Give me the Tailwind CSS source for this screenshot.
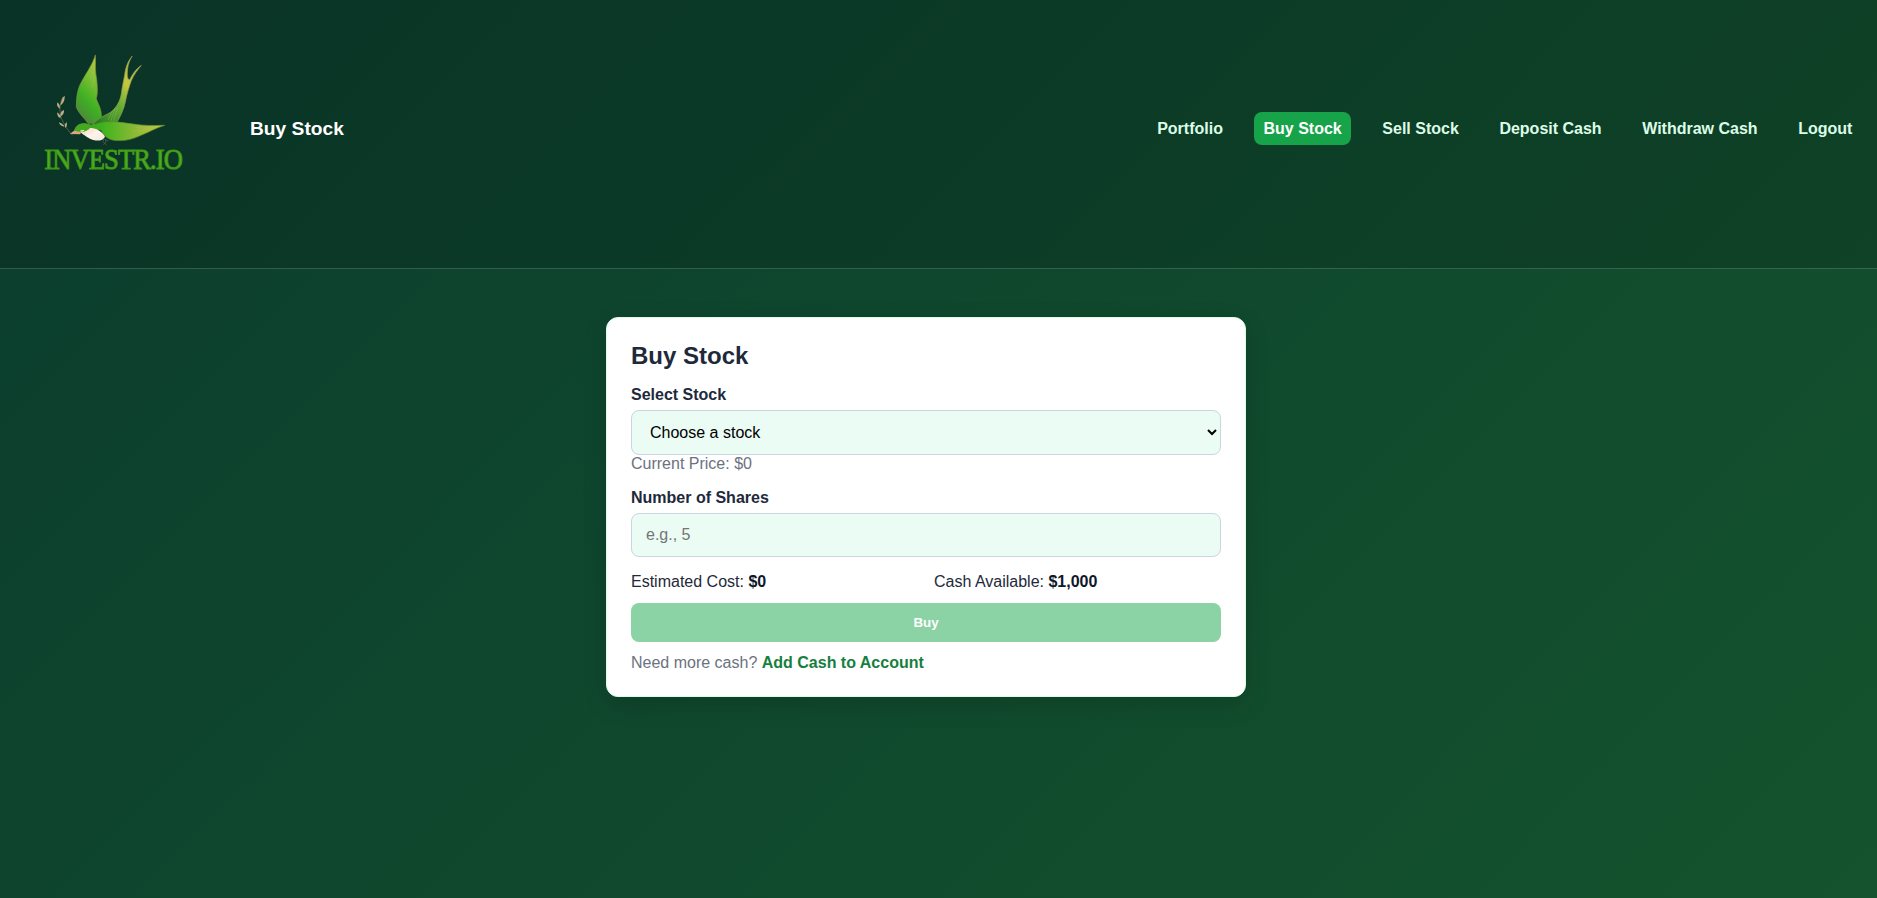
<!DOCTYPE html>
<html lang="en">
<head>
<meta charset="utf-8">
<title>Investr.io – Buy Stock</title>
<script src="https://cdn.jsdelivr.net/npm/@tailwindcss/browser@4"></script>
</head>
<body class="min-h-screen bg-[linear-gradient(135deg,#0b3d2e,#14532d)] font-['Liberation_Sans',Arial,sans-serif] text-base text-[#0f172a]">
<header class="flex h-[269px] items-start border-b border-white/18 bg-black/15 pl-[30px] pr-[15px]">
  <svg class="mt-10 h-[140px] w-[170px] shrink-0 overflow-visible" viewBox="0 0 510 420" role="img" aria-label="Investr.io">
    <defs>
      <linearGradient id="wing" x1="0.8" y1="0" x2="0.4" y2="1"><stop offset="0" stop-color="#c3cc3e"/><stop offset=".35" stop-color="#7fc035"/><stop offset=".7" stop-color="#3fb022"/><stop offset="1" stop-color="#4a8a3a"/></linearGradient>
      <linearGradient id="tail" x1=".8" y1="0" x2=".2" y2="1"><stop offset="0" stop-color="#b3bd44"/><stop offset=".35" stop-color="#c3c83c"/><stop offset=".6" stop-color="#6db338"/><stop offset="1" stop-color="#288221"/></linearGradient>
      <linearGradient id="right" x1="0" y1="0" x2="1" y2="0"><stop offset="0" stop-color="#2f9a1f"/><stop offset=".3" stop-color="#3bb31c"/><stop offset=".65" stop-color="#87b934"/><stop offset="1" stop-color="#c8c943"/></linearGradient>
      <linearGradient id="belly" x1="0" y1="0" x2="1" y2="1"><stop offset="0" stop-color="#f1d2b8"/><stop offset=".5" stop-color="#fff3ea"/><stop offset="1" stop-color="#f3e8e0"/></linearGradient>
    </defs>
    <g stroke-linejoin="round" stroke-linecap="round">
      <path d="M306 49C293 64 287 82 284 104C281 122 276 142 274 160C271 182 260 202 243 216C225 227 204 233 187 254L259 250C271 230 282 208 287 182C291 160 299 136 304 122C312 103 323 90 334 76C317 87 307 104 299 119C290 117 292 101 293 86C295 72 299 61 306 49Z" fill="url(#tail)" stroke="#929950" stroke-width="2"/>
      <path d="M196 46C186 78 165 104 150 134C141 155 139 175 139 202C147 222 164 235 174 250L190 250L203 238L214 230C215 207 205 194 199 176C204 159 202 140 200 117C194 91 198 67 196 46Z" fill="url(#wing)" stroke="#7d963d" stroke-width="2"/>
      <path d="M133 273C137 254 155 246 176 253C199 260 209 243 235 246C266 244 285 250 311 252C340 257 371 257 404 256C378 264 358 276 333 286C306 299 282 304 252 301C230 297 220 284 213 270C190 266 168 277 148 277Z" fill="url(#right)" stroke="#659033" stroke-width="2"/>
      <path d="M151 277C165 276 172 270 180 264C195 264 215 271 225 290C220 300 210 303 193 301C177 298 164 286 151 277Z" fill="url(#belly)"/>
      <path d="M133 273C137 254 155 246 176 253C183 257 181 267 171 271C160 278 148 276 133 273Z" fill="#45a81e"/>
      <path d="M132 272L119 282L151 283L153 276Z" fill="#dba57d"/>
      <path d="M153 273L161 272" stroke="#e4f2cf" stroke-width="4"/>
      <path d="M243 242L255 205M251 242L262 205M235 239L246 215M181 119L193 82M187 141L195 95M318 263L369 258M312 273L357 265" fill="none" stroke="#b5bf65" stroke-opacity=".5" stroke-width="2"/>
      <path d="M222 296L219 305L229 315M226 297L228 307L221 313M228 300L234 302" fill="none" stroke="#626251" stroke-width="2"/>
      <path d="M127 285C115 274 101 253 92 229C88 211 89 190 98 172" fill="none" stroke="#71775f" stroke-width="2"/>
      <g fill="#bcae83"><path d="M91 196C94 184 97 171 104 167C105 179 100 191 91 196ZM89 206C80 199 80 192 83 187C89 194 91 200 89 206ZM91 227C91 217 96 210 102 211C103 220 98 227 91 230ZM91 235C82 230 81 223 82 217C91 225 93 230 91 235ZM103 260C92 258 88 253 87 247C97 251 103 256 103 260ZM106 264C103 256 106 249 110 247C112 255 110 261 106 264Z"/></g>
    </g>
    <text x="43" y="388" textLength="413" lengthAdjust="spacingAndGlyphs" font-family="Liberation Serif,serif" font-size="86" letter-spacing="-3" fill="#4caf1d" stroke="#3f9717" stroke-width="3">INVESTR.IO</text>
  </svg>
  <div class="flex h-[256px] flex-1 items-center justify-between pl-[50px]">
    <h1 class="pt-0.5 text-[19.2px] font-bold text-white">Buy Stock</h1>
    <nav class="flex gap-[21.4px] font-bold text-[#dcfce7]">
      <a class="flex h-[33px] items-center px-[9.6px] pt-px">Portfolio</a>
      <a class="flex h-[33px] items-center rounded-lg bg-[#16a34a] px-[9.6px] pt-px text-white">Buy Stock</a>
      <a class="flex h-[33px] items-center px-[9.6px] pt-px">Sell Stock</a>
      <a class="flex h-[33px] items-center px-[9.6px] pt-px">Deposit Cash</a>
      <a class="flex h-[33px] items-center px-[9.6px] pt-px">Withdraw Cash</a>
      <a class="flex h-[33px] items-center px-[9.6px] pt-px">Logout</a>
    </nav>
  </div>
</header>
<main class="pt-12 pl-[606px]">
  <section class="flex h-[380px] w-[640px] flex-col rounded-xl border border-[#dcfce7] bg-white px-6 pt-6 shadow-[0_8px_24px_rgba(0,0,0,0.15)]">
    <h2 class="text-2xl leading-7 font-bold text-[#1e293b]">Buy Stock</h2>
    <label for="stock" class="mt-4 leading-[18px] font-bold text-[#1e293b]">Select Stock</label>
    <select id="stock" class="mt-[6px] h-[45px] w-full shrink-0 rounded-lg border border-[#cbd5e1] bg-[#eafcf4] px-[14px] text-black"><option>Choose a stock</option></select>
    <p class="leading-[18px] text-[#6b7280]">Current Price: $0</p>
    <label for="shares" class="mt-4 leading-[18px] font-bold text-[#1e293b]">Number of Shares</label>
    <input id="shares" class="mt-[6px] h-[44px] w-full shrink-0 rounded-lg border border-[#cbd5e1] bg-[#eafcf4] px-[14px] placeholder:text-[#757575]" placeholder="e.g., 5">
    <div class="mt-4 grid grid-cols-2 gap-4 leading-[18px] text-[#1e293b]">
      <p>Estimated Cost: <strong class="text-[#0f172a]">$0</strong></p>
      <p>Cash Available: <strong class="text-[#0f172a]">$1,000</strong></p>
    </div>
    <button class="mt-3 h-[39px] shrink-0 rounded-lg bg-[#8bd2a5] text-[13.333px] font-bold text-white">Buy</button>
    <p class="mt-3 leading-[18px] text-[#6b7280]">Need more cash? <a class="font-bold text-[#15803d]">Add Cash to Account</a></p>
  </section>
</main>
</body>
</html>
